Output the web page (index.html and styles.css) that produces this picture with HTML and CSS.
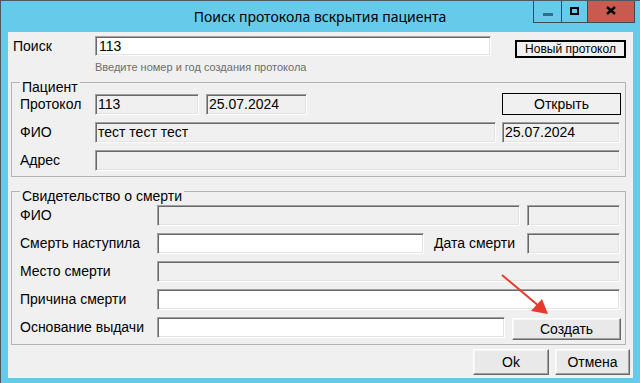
FILE: index.html
```html
<!DOCTYPE html>
<html lang="ru">
<head>
    <meta charset="UTF-8">
    <title>Поиск протокола вскрытия пациента</title>
    <link rel="stylesheet" href="styles.css">
</head>
<body>
    <div class="window">
        <div class="titlebar">
            <div></div>
            <div class="title">Поиск протокола вскрытия пациента</div>
            <div class="controls">
                <span class="ctl min"><i></i></span>
                <span class="ctl max"><i></i></span>
                <span class="ctl close">
                    <svg width="10" height="9" viewBox="0 0 10 9"><path d="M1 1 L9 8 M9 1 L1 8" stroke="#000" stroke-width="2.4"/></svg>
                </span>
            </div>
        </div>
        <div class="client">
            <div class="search-row">
                <label class="lbl search-lbl">Поиск</label>
                <input class="field white search-input" value="113">
                <button class="btn-black new-btn">Новый протокол</button>
            </div>
            <div class="hint">Введите номер и год создания протокола</div>

            <fieldset class="group patient">
                <legend>Пациент</legend>
                <div class="row first">
                    <label class="lbl w75">Протокол</label>
                    <div class="field" style="width:104px">113</div>
                    <div class="field gap7" style="width:101px">25.07.2024</div>
                    <button class="btn-black open-btn">Открыть</button>
                </div>
                <div class="row">
                    <label class="lbl w75">ФИО</label>
                    <div class="field" style="width:401px">тест тест тест</div>
                    <div class="field gap6" style="width:118px">25.07.2024</div>
                </div>
                <div class="row">
                    <label class="lbl w75">Адрес</label>
                    <div class="field" style="width:525px"></div>
                </div>
            </fieldset>

            <fieldset class="group death">
                <legend>Свидетельство о смерти</legend>
                <div class="row first">
                    <label class="lbl w137">ФИО</label>
                    <div class="field" style="width:363px"></div>
                    <div class="field gap7" style="width:93px"></div>
                </div>
                <div class="row">
                    <label class="lbl w137">Смерть наступила</label>
                    <input class="field white" style="width:267px">
                    <label class="lbl date-lbl">Дата смерти</label>
                    <div class="field" style="width:93px"></div>
                </div>
                <div class="row">
                    <label class="lbl w137">Место смерти</label>
                    <div class="field" style="width:463px"></div>
                </div>
                <div class="row">
                    <label class="lbl w137">Причина смерти</label>
                    <input class="field white" style="width:463px">
                </div>
                <div class="row">
                    <label class="lbl w137">Основание выдачи</label>
                    <input class="field white" style="width:348px">
                    <button class="btn create-btn">Создать</button>
                </div>
            </fieldset>

            <div class="footer">
                <button class="btn ok-btn">Ok</button>
                <button class="btn cancel-btn">Отмена</button>
            </div>
        </div>

        <!-- pointer drawn over the form -->
        <svg class="arrow" width="640" height="383" viewBox="0 0 640 383">
            <line x1="502" y1="275" x2="540" y2="307" stroke="#e53a2c" stroke-width="2"/>
            <polygon points="548,314 531,311 542,299" fill="#e53a2c"/>
        </svg>
    </div>
</body>
</html>
```

FILE: styles.css
```css
body {
    margin: 0;
    padding: 0;
    font-family: "Liberation Sans", Arial, sans-serif;
}
.window {
    position: relative;
    width: 639px;
    height: 382px;
    background: #66cbea;
    border-top: 1px solid #4f5a60;
    border-left: 1px solid #4f5a60;
    overflow: hidden;
}
.titlebar {
    display: grid;
    grid-template-columns: 1fr auto 1fr;
    height: 31px;
}
.title {
    font-family: "Noto Sans", sans-serif;
    font-size: 14px;
    line-height: 31px;
    color: #000;
    padding-right: 1px;
}
.controls {
    display: flex;
    justify-content: flex-end;
    align-items: flex-start;
    padding-right: 5px;
}
.ctl {
    display: flex;
    align-items: center;
    justify-content: center;
    height: 21px;
    border: 1px solid #3d4a50;
    border-top: 0;
}
.min {
    width: 27px;
}
.min i {
    display: block;
    width: 10px;
    height: 3px;
    margin-top: 5px;
    background: #2e6f8c;
}
.max {
    width: 25px;
    border-left: 0;
}
.max i {
    display: block;
    width: 5px;
    height: 4px;
    border: 2px solid #000;
    margin-bottom: 2px;
}
.close {
    width: 46px;
    border-left: 0;
    background: #c75b50;
}
.close svg {
    margin-bottom: 2px;
}
.client {
    width: 625px;
    height: 346px;
    margin-left: 7px;
    background: #f0f0f0;
    display: flex;
    flex-direction: column;
}
.lbl {
    font-size: 14px;
    color: #000;
    line-height: 21px;
    flex: none;
}
.field {
    box-sizing: border-box;
    height: 21px;
    padding: 0 2px;
    margin: 0;
    font-family: "Liberation Sans", Arial, sans-serif;
    font-size: 14px;
    line-height: 19px;
    color: #000;
    background: #f0f0f0;
    border: 1px solid;
    border-color: #a0a0a0 #ffffff #ffffff #a0a0a0;
    box-shadow: inset 1px 1px #696969, inset -1px -1px #e3e3e3;
    outline: none;
    flex: none;
}
.white {
    background: #fff;
}
.search-row {
    display: flex;
    align-items: flex-start;
    margin-top: 4px;
}
.search-lbl {
    width: 87px;
    padding-left: 5px;
    line-height: 20px;
    box-sizing: border-box;
}
.search-input {
    width: 396px;
    height: 20px;
    padding-left: 3px;
}
.btn-black {
    box-sizing: border-box;
    font-family: "Liberation Sans", Arial, sans-serif;
    color: #000;
    background: #f0f0f0;
    border: 2px solid #000;
    padding: 0;
    flex: none;
}
.new-btn {
    width: 111px;
    height: 18px;
    margin-left: 24px;
    margin-top: 4px;
    font-size: 12px;
    border-width: 2px;
}
.hint {
    margin-left: 87px;
    margin-top: 3px;
    font-size: 11px;
    line-height: 13px;
    color: #6d6d6d;
}
.group {
    box-sizing: border-box;
    width: 615px;
    margin: 0 0 0 3px;
    padding: 0 4px 5px 8px;
    border: 1px solid #b4b4b4;
    min-width: 0;
}
.group legend {
    font-size: 14px;
    line-height: 14px;
    padding: 10px 2px 0 2px;
    margin-left: 0;
    color: #000;
}
.patient {
    margin-top: -4px;
}
.death {
    margin-top: 2px;
    padding-bottom: 6px;
}
.row {
    display: flex;
    align-items: flex-start;
    height: 21px;
    margin-top: 7px;
}
.patient .row.first {
    margin-top: 0;
}
.death .row.first {
    margin-top: 2px;
}
.w75 {
    width: 75px;
}
.w137 {
    width: 137px;
}
.gap7 {
    margin-left: 7px;
}
.gap6 {
    margin-left: 6px;
}
.open-btn {
    width: 119px;
    height: 22px;
    margin-left: auto;
    margin-top: -1px;
    border-width: 1px;
    font-size: 14px;
}
.date-lbl {
    width: 93px;
    margin-left: 10px;
}
.btn {
    box-sizing: border-box;
    font-family: "Liberation Sans", Arial, sans-serif;
    font-size: 14px;
    color: #000;
    background: #e9e9e9;
    border: 1px solid;
    border-color: #ffffff #696969 #696969 #ffffff;
    box-shadow: inset -1px -1px #a0a0a0, inset 1px 1px #f6f6f6;
    padding: 0;
    flex: none;
}
.create-btn {
    width: 109px;
    height: 22px;
    margin-left: 7px;
    margin-top: 1px;
}
.footer {
    display: flex;
    justify-content: flex-end;
    gap: 6px;
    margin-top: 4px;
    padding-right: 3px;
}
.ok-btn {
    width: 76px;
    height: 26px;
}
.cancel-btn {
    width: 75px;
    height: 26px;
}
.arrow {
    position: absolute;
    left: -1px;
    top: -1px;
    pointer-events: none;
}
```
